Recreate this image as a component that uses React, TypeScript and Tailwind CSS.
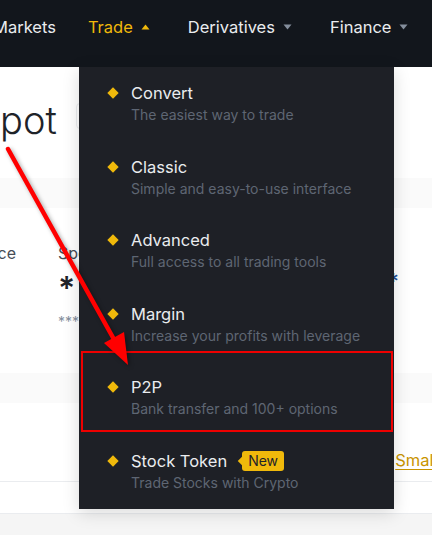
import React from "react";

const items = [
  { title: "Convert", desc: "The easiest way to trade" },
  { title: "Classic", desc: "Simple and easy-to-use interface" },
  { title: "Advanced", desc: "Full access to all trading tools" },
  { title: "Margin", desc: "Increase your profits with leverage" },
  { title: "P2P", desc: "Bank transfer and 100+ options" },
  { title: "Stock Token", desc: "Trade Stocks with Crypto", badge: "New" },
];

function Caret({ up, color }: { up?: boolean; color: string }) {
  return (
    <svg width="9" height="6" viewBox="0 0 9 6" className="shrink-0">
      {up ? <path d="M0.5 5.5 L4.5 0.5 L8.5 5.5 Z" fill={color} /> : <path d="M0.5 0.5 L8.5 0.5 L4.5 5.5 Z" fill={color} />}
    </svg>
  );
}

function NavBar() {
  return (
    <nav className="h-[67px] bg-[#12161c] flex items-start pt-[16px] text-[16.5px] text-[#eaecef] whitespace-nowrap">
      <span className="ml-[-7px] leading-[22px]">Markets</span>
      <div className="ml-[32px] flex items-center gap-[8px] text-[#f0b90b]">
        <span className="leading-[22px]">Trade</span>
        <Caret up color="#f0b90b" />
      </div>
      <div className="ml-[38px] flex items-center gap-[8px]">
        <span className="leading-[22px]">Derivatives</span>
        <Caret color="#848e9c" />
      </div>
      <div className="ml-[38px] flex items-center gap-[8px]">
        <span className="leading-[22px]">Finance</span>
        <Caret color="#848e9c" />
      </div>
    </nav>
  );
}

function TradeMenu() {
  return (
    <div className="absolute left-[79px] top-[67px] w-[315px] bg-[#1e2026] shadow-[0_4px_16px_rgba(0,0,0,0.15)]">
      {items.map((it) => (
        <div key={it.title} className="h-[73.6px] pt-[15px] pl-[28px] flex gap-[12px]">
          <div className="w-[12px] h-[22px] flex items-center justify-center">
            <span className="block w-[8px] h-[8px] bg-[#f0b90b] rotate-45" />
          </div>
          <div className="flex flex-col">
            <div className="flex items-center h-[22px]">
              <span className="text-[16.5px] text-[#eaecef] leading-[22px]">{it.title}</span>
              {it.badge && (
                <span className="relative ml-[15px] h-[20px] px-[6px] rounded-[3px] bg-[#f0b90b] text-[#1e2329] text-[14px] leading-[20px]">
                  <span className="absolute left-[-3px] top-[7px] w-[6px] h-[6px] bg-[#f0b90b] rotate-45" />
                  <span className="relative">{it.badge}</span>
                </span>
              )}
            </div>
            <span className="text-[14px] text-[#5e6673] leading-[22px]">{it.desc}</span>
          </div>
        </div>
      ))}
    </div>
  );
}

function Annotation() {
  return (
    <>
      <div className="absolute left-[81px] top-[351px] w-[312px] h-[81px] border-2 border-[#ee0000]" />
      <svg
        className="absolute left-0 top-0 pointer-events-none"
        width="432"
        height="535"
        style={{ filter: "drop-shadow(2px 2px 2px rgba(0,0,0,0.35))" }}
      >
        <line x1="8" y1="149" x2="116" y2="343" stroke="#ff0000" strokeWidth="4.5" strokeLinecap="round" />
        <polygon points="128,365 104,343 124,332" fill="#ff0000" />
      </svg>
    </>
  );
}

export default function App() {
  return (
    <div className="relative w-[432px] h-[535px] overflow-hidden bg-white font-['Inter',sans-serif]">
      <NavBar />

      {/* page title row */}
      <div className="h-[111px] flex items-center">
        <span className="ml-[-24px] text-[38px] font-light text-[#1e2329] leading-[48px] mt-[-6px]">Spot</span>
        <div className="ml-[19px] mt-[-14px] w-[60px] h-[26px] border border-[#eaecef] rounded-[4px]" />
      </div>

      <div className="h-[30px] bg-[#fafafa]" />

      {/* balance block */}
      <div className="h-[165px] flex pt-[33px]">
        <div className="w-[16px] flex justify-end whitespace-nowrap">
          <span className="text-[16px] text-[#474d57] leading-[24px]">Balance</span>
        </div>
        <div className="ml-[42px] flex flex-col whitespace-nowrap">
          <span className="text-[16px] text-[#474d57] leading-[24px]">Spot balance</span>
          <span className="mt-[6px] text-[32px] font-semibold tracking-[4px] text-[#1e2329] leading-[36px]">********</span>
          <span className="mt-[5px] text-[14px] text-[#848e9c] leading-[20px]">********</span>
        </div>
        <div className="ml-auto mr-[33px] pt-[28px] text-[22px] font-semibold text-[#1e4f9a] leading-[24px]">*</div>
      </div>

      <div className="h-[30px] bg-[#fafafa]" />

      {/* small balances row */}
      <div className="h-[79px] flex items-start justify-end pt-[46px] border-b border-[#eaecef]">
        <a className="mr-[-81px] text-[16.5px] text-[#c99400] underline underline-offset-[3px] whitespace-nowrap leading-[22px]">
          Small Balances
        </a>
      </div>
      <div className="h-[31px]" />
      <div className="h-[30px] bg-[#f5f5f5] border-t border-[#eaecef]" />

      <TradeMenu />
      <Annotation />
    </div>
  );
}
